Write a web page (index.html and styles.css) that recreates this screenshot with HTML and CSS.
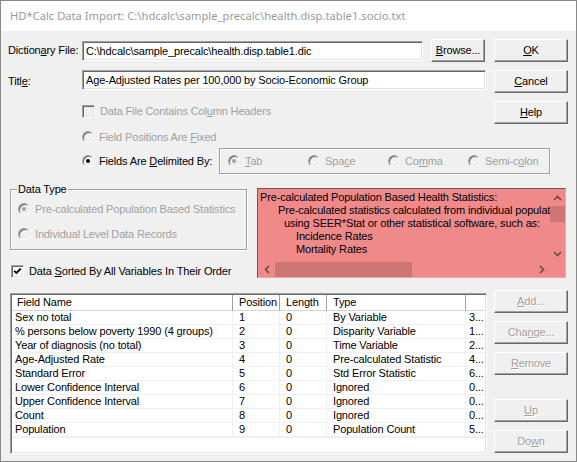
FILE: index.html
```html
<!DOCTYPE html>
<html lang="en">
<head>
    <meta charset="UTF-8">
    <title>HD*Calc Data Import</title>
    <link rel="stylesheet" href="styles.css">
</head>
<body>
<div class="window">
    <div class="titlebar">HD*Calc Data Import: C:\hdcalc\sample_precalc\health.disp.table1.socio.txt</div>
    <div class="client">

        <div class="row row-dict">
            <span class="lbl">Diction<u>a</u>ry File:</span>
            <div class="edit edit-dict">C:\hdcalc\sample_precalc\health.disp.table1.dic</div>
            <button class="btn btn-browse"><u>B</u>rowse...</button>
            <button class="btn btn-side"><u>O</u>K</button>
        </div>

        <div class="row row-title">
            <span class="lbl">Titl<u>e</u>:</span>
            <div class="edit edit-title">Age-Adjusted Rates per 100,000 by Socio-Economic Group</div>
            <button class="btn btn-side"><u>C</u>ancel</button>
        </div>

        <div class="row row-help">
            <div class="opt-line indent disabled"><span class="check"></span><span>Data File Contains Col<u>u</u>mn Headers</span></div>
            <button class="btn btn-side"><u>H</u>elp</button>
        </div>

        <div class="row row-fixed">
            <div class="opt-line indent disabled"><span class="radio"></span><span>Field Positions Are <u>F</u>ixed</span></div>
        </div>

        <div class="row row-delim">
            <div class="opt-line indent"><span class="radio on"><span class="dot"></span></span><span>Fields Are <u>D</u>elimited By:</span></div>
            <div class="groupbox delim-box">
                <div class="opt-line disabled delim-opt"><span class="radio"><span class="dot"></span></span><span><u>T</u>ab</span></div>
                <div class="opt-line disabled delim-opt"><span class="radio"></span><span>Spa<u>c</u>e</span></div>
                <div class="opt-line disabled delim-opt"><span class="radio"></span><span>Co<u>m</u>ma</span></div>
                <div class="opt-line disabled delim-opt"><span class="radio"></span><span>Semi-c<u>o</u>lon</span></div>
            </div>
        </div>

        <div class="row row-data">
            <div class="left-col">
                <div class="groupbox datatype">
                    <div class="legend">Data Type</div>
                    <div class="opt-line disabled dt-first"><span class="radio"><span class="dot"></span></span><span>Pre-calculated Population Based Statistics</span></div>
                    <div class="opt-line disabled dt-second"><span class="radio"></span><span>Individual Level Data Records</span></div>
                </div>
                <div class="opt-line sorted"><span class="check on"><svg width="9" height="9" viewBox="0 0 9 9"><polyline points="1.2,3.8 3.4,6 7.8,1.6" fill="none" stroke="#000" stroke-width="1.9"/></svg></span><span>Data <u>S</u>orted By All Variables In Their Order</span></div>
            </div>

            <div class="infobox">
                <div class="info-text">
                    <div class="ln">Pre-calculated Population Based Health Statistics:</div>
                    <div class="ln ln2">Pre-calculated statistics calculated from individual population data</div>
                    <div class="ln ln3">using SEER*Stat or other statistical software, such as:</div>
                    <div class="ln ln4">Incidence Rates</div>
                    <div class="ln ln4">Mortality Rates</div>
                </div>
                <div class="vscroll">
                    <div class="arrow"><svg width="9" height="6" viewBox="0 0 9 6"><polyline points="1,5 4.5,1.5 8,5" fill="none" stroke="#6d4646" stroke-width="1.6"/></svg></div>
                    <div class="vthumb"></div>
                    <div class="vtrack"></div>
                    <div class="arrow"><svg width="9" height="6" viewBox="0 0 9 6"><polyline points="1,1 4.5,4.5 8,1" fill="none" stroke="#6d4646" stroke-width="1.6"/></svg></div>
                </div>
                <div class="hscroll">
                    <div class="arrow"><svg width="6" height="9" viewBox="0 0 6 9"><polyline points="5,1 1.5,4.5 5,8" fill="none" stroke="#6d4646" stroke-width="1.6"/></svg></div>
                    <div class="hthumb"></div>
                    <div class="htrack"></div>
                    <div class="arrow"><svg width="6" height="9" viewBox="0 0 6 9"><polyline points="1,1 4.5,4.5 1,8" fill="none" stroke="#6d4646" stroke-width="1.6"/></svg></div>
                </div>
                <div class="corner"></div>
            </div>
        </div>

        <div class="row row-list">
            <div class="list">
                <table class="fields">
                    <colgroup>
                        <col class="c-name">
                        <col class="c-pos">
                        <col class="c-len">
                        <col class="c-type">
                        <col class="c-extra">
                    </colgroup>
                    <thead>
                        <tr><th>Field Name</th><th>Position</th><th>Length</th><th>Type</th><th></th></tr>
                    </thead>
                    <tbody>
                        <tr><td>Sex no total</td><td>1</td><td>0</td><td>By Variable</td><td>3...</td></tr>
                        <tr><td>% persons below poverty 1990 (4 groups)</td><td>2</td><td>0</td><td>Disparity Variable</td><td>1...</td></tr>
                        <tr><td>Year of diagnosis (no total)</td><td>3</td><td>0</td><td>Time Variable</td><td>2...</td></tr>
                        <tr><td>Age-Adjusted Rate</td><td>4</td><td>0</td><td>Pre-calculated Statistic</td><td>4...</td></tr>
                        <tr><td>Standard Error</td><td>5</td><td>0</td><td>Std Error Statistic</td><td>6...</td></tr>
                        <tr><td>Lower Confidence Interval</td><td>6</td><td>0</td><td>Ignored</td><td>0...</td></tr>
                        <tr><td>Upper Confidence Interval</td><td>7</td><td>0</td><td>Ignored</td><td>0...</td></tr>
                        <tr><td>Count</td><td>8</td><td>0</td><td>Ignored</td><td>0...</td></tr>
                        <tr><td>Population</td><td>9</td><td>0</td><td>Population Count</td><td>5...</td></tr>
                        <tr class="empty"><td></td><td></td><td></td><td></td><td></td></tr>
                    </tbody>
                </table>
            </div>

            <div class="side-buttons">
                <button class="btn" disabled><u>A</u>dd...</button>
                <button class="btn" disabled>Cha<u>n</u>ge...</button>
                <button class="btn" disabled><u>R</u>emove</button>
                <button class="btn btn-up" disabled><u>U</u>p</button>
                <button class="btn" disabled>Do<u>w</u>n</button>
            </div>
        </div>

    </div>
</div>
</body>
</html>
```

FILE: styles.css
```css
* {
    box-sizing: border-box;
}

body {
    margin: 0;
    background: #fff;
}

.window {
    width: 577px;
    height: 462px;
    border: 1px solid #888;
    background: #f0f0f0;
    font-family: "Liberation Sans", Arial, sans-serif;
    font-size: 11px;
    letter-spacing: -0.15px;
    color: #000;
    overflow: hidden;
}

.titlebar {
    height: 30px;
    background: #fff;
    color: #9a9a9a;
    font-family: "Noto Sans", sans-serif;
    font-size: 11.2px;
    letter-spacing: 0;
    line-height: 30px;
    padding-left: 9px;
    white-space: nowrap;
}

.client {
    padding: 8px 8px 0 7px;
}

.row {
    display: flex;
    align-items: flex-start;
}

.lbl {
    width: 74px;
    line-height: 23px;
    white-space: nowrap;
}

/* sunken edit box */
.edit {
    height: 20px;
    background: #fff;
    border: 1px solid;
    border-color: #a0a0a0 #fff #fff #a0a0a0;
    box-shadow: inset 1px 1px #696969, inset -1px -1px #e3e3e3;
    padding: 0 3px;
    line-height: 18px;
    white-space: nowrap;
    overflow: hidden;
}

.edit-dict {
    width: 341px;
    margin-top: 2px;
}

.edit-title {
    width: 404px;
}

/* raised push button */
.btn {
    display: block;
    width: 74px;
    height: 23px;
    background: #f0f0f0;
    border: 1px solid;
    border-color: #fff #696969 #696969 #fff;
    box-shadow: inset -1px -1px #a0a0a0;
    font: inherit;
    letter-spacing: inherit;
    color: #000;
    padding: 0;
    text-align: center;
    line-height: 21px;
}

.btn:disabled {
    color: #a0a0a0;
    text-shadow: 1px 1px #fff;
}

.btn-browse {
    width: 54px;
    margin-left: 8px;
}

.btn-side {
    margin-left: auto;
}

.row-title,
.row-help {
    margin-top: 8px;
}

.opt-line {
    display: flex;
    align-items: center;
    gap: 5px;
    height: 14px;
    white-space: nowrap;
}

.opt-line.disabled {
    color: #a0a0a0;
}

.indent {
    margin-left: 74px;
}

.row-help .opt-line {
    margin-top: 3px;
}

.check {
    display: inline-flex;
    align-items: center;
    justify-content: center;
    width: 13px;
    height: 13px;
    flex: none;
    background: #f0f0f0;
    border: 1px solid;
    border-color: #a0a0a0 #fff #fff #a0a0a0;
    box-shadow: inset 1px 1px #696969, inset -1px -1px #e3e3e3;
}

.check.on {
    background: #fff;
}

.radio {
    display: inline-flex;
    align-items: center;
    justify-content: center;
    width: 12px;
    height: 12px;
    flex: none;
    border-radius: 50%;
    background: #f0f0f0;
    border: 1px solid;
    border-color: #a0a0a0 #fff #fff #a0a0a0;
    box-shadow: inset 1px 1px #696969, inset -1px -1px #e3e3e3;
}

.radio.on {
    background: #fff;
}

.dot {
    width: 4px;
    height: 4px;
    border-radius: 50%;
    background: #a0a0a0;
}

.radio.on .dot {
    background: #000;
}

.row-fixed {
    margin-top: 6px;
}

.row-delim {
    margin-top: 4px;
    height: 26px;
    align-items: center;
}

/* etched group frame */
.groupbox {
    border: 1px solid #a0a0a0;
    box-shadow: 1px 1px 0 #fff, inset 1px 1px 0 #fff;
}

.delim-box {
    display: flex;
    align-items: center;
    width: 331px;
    height: 26px;
    margin-left: auto;
    margin-right: 18px;
    padding-left: 8px;
}

.delim-opt {
    width: 80px;
}

.row-data {
    margin-top: 14px;
}

.left-col {
    width: 239px;
}

.datatype {
    width: 237px;
    height: 61px;
    margin: 1px 0 0 2px;
}

.legend {
    width: max-content;
    margin: -8px 0 0 6px;
    padding: 0 1px;
    line-height: 14px;
    background: #f0f0f0;
}

.dt-first {
    margin: 6px 0 0 7px;
}

.dt-second {
    margin: 11px 0 0 7px;
}

.sorted {
    margin: 14px 0 0 3px;
}

/* red description panel */
.infobox {
    display: grid;
    grid-template-columns: 1fr 15px;
    grid-template-rows: 1fr 15px;
    width: 309px;
    height: 90px;
    margin-left: 10px;
    background: #f08a8a;
    border: 1px solid;
    border-color: #6e5656 #f4a4a4 #f4a4a4 #6e5656;
}

.info-text {
    overflow: hidden;
    padding: 2px 0 0 2px;
}

.ln {
    line-height: 13px;
    white-space: nowrap;
}

.ln2 {
    padding-left: 18px;
}

.ln3 {
    padding-left: 24px;
}

.ln4 {
    padding-left: 36px;
}

.vscroll {
    display: flex;
    flex-direction: column;
}

.vscroll .arrow {
    height: 17px;
}

.vthumb {
    height: 16px;
    background: #cd7676;
}

.vtrack {
    flex: 1;
}

.hscroll {
    display: flex;
}

.hscroll .arrow {
    width: 17px;
}

.hthumb {
    width: 137px;
    background: #cd7676;
}

.htrack {
    flex: 1;
}

.arrow {
    display: flex;
    align-items: center;
    justify-content: center;
}

.row-list {
    margin-top: 12px;
}

.list {
    width: 477px;
    height: 161px;
    margin: 3px 0 0 2px;
    background: #fff;
    border: 1px solid;
    border-color: #a0a0a0 #fff #fff #a0a0a0;
    box-shadow: inset 1px 1px #696969, inset -1px -1px #e3e3e3;
    padding: 1px 1px 0 1px;
    overflow: hidden;
}

.fields {
    table-layout: fixed;
    border-collapse: separate;
    border-spacing: 0;
    width: 473px;
}

.c-name { width: 221px; }
.c-pos { width: 47px; }
.c-len { width: 47px; }
.c-type { width: 139px; }
.c-extra { width: 19px; }

.fields th {
    font-weight: normal;
    text-align: left;
    line-height: 15px;
    padding: 0 0 0 6px;
    background: #fff;
    border-right: 1px solid #a0a0a0;
    border-bottom: 1px solid #d5d5d5;
    white-space: nowrap;
    overflow: hidden;
}

.fields th:first-child {
    padding-left: 5px;
}

.fields th:last-child {
    border-right: none;
}

.fields td {
    line-height: 13px;
    padding: 0 0 0 6px;
    border-right: 1px solid #f0f0f0;
    border-bottom: 1px solid #f0f0f0;
    white-space: nowrap;
    overflow: hidden;
}

.fields td:first-child {
    padding-left: 3px;
}

.fields td:last-child {
    padding-left: 3px;
    border-right: none;
}

.side-buttons {
    margin-left: auto;
    display: flex;
    flex-direction: column;
    gap: 8px;
}

.btn-up {
    margin-top: 16px;
}
```
